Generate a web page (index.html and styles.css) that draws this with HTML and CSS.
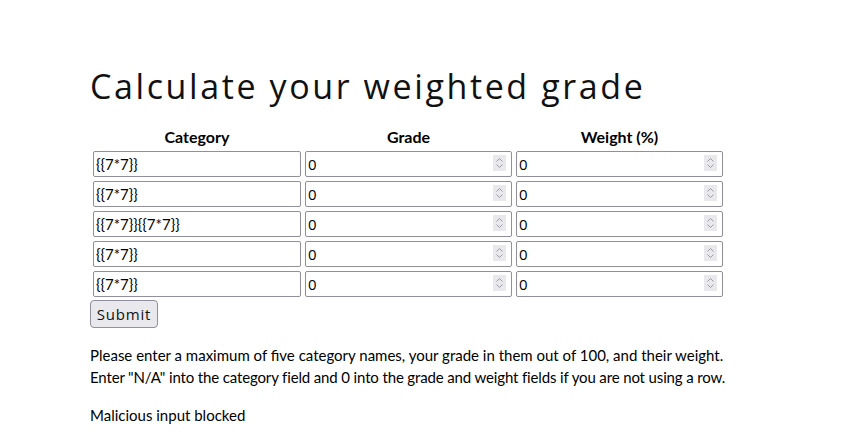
FILE: index.html
```html
<!DOCTYPE html>
<html>
<head>
<meta charset="utf-8">
<link rel="stylesheet" href="styles.css">
</head>
<body>
<main class="page">
  <h1 class="title">Calculate your weighted grade</h1>
  <form class="form">
    <table class="grid">
      <thead>
        <tr><th>Category</th><th>Grade</th><th>Weight (%)</th></tr>
      </thead>
      <tbody>
        <tr>
          <td><input class="txt" type="text" value="{{7*7}}"></td>
          <td><span class="field"><input class="num" type="number" value="0"><span class="spin"><svg width="13" height="16" viewBox="0 0 13 16"><path d="M3.5 6.5 6.5 3.5 9.5 6.5M3.5 9.5 6.5 12.5 9.5 9.5" fill="none" stroke="#9b9ba3" stroke-width="1"/></svg></span></span></td>
          <td><span class="field"><input class="num w" type="number" value="0"><span class="spin"><svg width="13" height="16" viewBox="0 0 13 16"><path d="M3.5 6.5 6.5 3.5 9.5 6.5M3.5 9.5 6.5 12.5 9.5 9.5" fill="none" stroke="#9b9ba3" stroke-width="1"/></svg></span></span></td>
        </tr>
        <tr>
          <td><input class="txt" type="text" value="{{7*7}}"></td>
          <td><span class="field"><input class="num" type="number" value="0"><span class="spin"><svg width="13" height="16" viewBox="0 0 13 16"><path d="M3.5 6.5 6.5 3.5 9.5 6.5M3.5 9.5 6.5 12.5 9.5 9.5" fill="none" stroke="#9b9ba3" stroke-width="1"/></svg></span></span></td>
          <td><span class="field"><input class="num w" type="number" value="0"><span class="spin"><svg width="13" height="16" viewBox="0 0 13 16"><path d="M3.5 6.5 6.5 3.5 9.5 6.5M3.5 9.5 6.5 12.5 9.5 9.5" fill="none" stroke="#9b9ba3" stroke-width="1"/></svg></span></span></td>
        </tr>
        <tr>
          <td><input class="txt" type="text" value="{{7*7}}{{7*7}}"></td>
          <td><span class="field"><input class="num" type="number" value="0"><span class="spin"><svg width="13" height="16" viewBox="0 0 13 16"><path d="M3.5 6.5 6.5 3.5 9.5 6.5M3.5 9.5 6.5 12.5 9.5 9.5" fill="none" stroke="#9b9ba3" stroke-width="1"/></svg></span></span></td>
          <td><span class="field"><input class="num w" type="number" value="0"><span class="spin"><svg width="13" height="16" viewBox="0 0 13 16"><path d="M3.5 6.5 6.5 3.5 9.5 6.5M3.5 9.5 6.5 12.5 9.5 9.5" fill="none" stroke="#9b9ba3" stroke-width="1"/></svg></span></span></td>
        </tr>
        <tr>
          <td><input class="txt" type="text" value="{{7*7}}"></td>
          <td><span class="field"><input class="num" type="number" value="0"><span class="spin"><svg width="13" height="16" viewBox="0 0 13 16"><path d="M3.5 6.5 6.5 3.5 9.5 6.5M3.5 9.5 6.5 12.5 9.5 9.5" fill="none" stroke="#9b9ba3" stroke-width="1"/></svg></span></span></td>
          <td><span class="field"><input class="num w" type="number" value="0"><span class="spin"><svg width="13" height="16" viewBox="0 0 13 16"><path d="M3.5 6.5 6.5 3.5 9.5 6.5M3.5 9.5 6.5 12.5 9.5 9.5" fill="none" stroke="#9b9ba3" stroke-width="1"/></svg></span></span></td>
        </tr>
        <tr>
          <td><input class="txt" type="text" value="{{7*7}}"></td>
          <td><span class="field"><input class="num" type="number" value="0"><span class="spin"><svg width="13" height="16" viewBox="0 0 13 16"><path d="M3.5 6.5 6.5 3.5 9.5 6.5M3.5 9.5 6.5 12.5 9.5 9.5" fill="none" stroke="#9b9ba3" stroke-width="1"/></svg></span></span></td>
          <td><span class="field"><input class="num w" type="number" value="0"><span class="spin"><svg width="13" height="16" viewBox="0 0 13 16"><path d="M3.5 6.5 6.5 3.5 9.5 6.5M3.5 9.5 6.5 12.5 9.5 9.5" fill="none" stroke="#9b9ba3" stroke-width="1"/></svg></span></span></td>
        </tr>
      </tbody>
    </table>
    <button class="submit" type="button">Submit</button>
  </form>
  <p class="help"><span class="l1">Please enter a maximum of five category names, your grade in them out of 100, and their weight.</span><br><span class="l2">Enter "N/A" into the category field and 0 into the grade and weight fields if you are not using a row.</span></p>
  <p class="msg">Malicious input blocked</p>
</main>
</body>
</html>
```
FILE: styles.css
```css
body {
  margin: 0;
  background: #fff;
  color: #000;
  font-family: Lato, "Liberation Sans", sans-serif;
  font-size: 15px;
}
.page {
  padding: 64px 90px 0;
}
.title {
  font-family: "Open Sans", sans-serif;
  font-weight: 400;
  font-size: 34px;
  letter-spacing: 2.6px;
  line-height: 44px;
  margin: 0 0 14px;
  color: #111;
}
.grid {
  border-spacing: 2px;
}
.grid th {
  font-size: 16px;
  font-weight: 700;
  padding: 1px;
  height: 22px;
}
.grid td {
  padding: 1px;
}
.field {
  position: relative;
  display: block;
}
.grid input {
  display: block;
  box-sizing: border-box;
  height: 26px;
  margin: 0;
  border: 1px solid #8f8f9d;
  border-radius: 2px;
  padding: 1px 2px;
  color: #000;
  background: #fff;
  outline: none;
}
.txt {
  width: 208px;
  font-family: Lato, sans-serif;
  font-size: 15px;
}
.num {
  width: 207px;
  font-family: "Open Sans", sans-serif;
  font-size: 15px;
  -moz-appearance: textfield;
}
.num::-webkit-inner-spin-button,
.num::-webkit-outer-spin-button {
  -webkit-appearance: none;
  margin: 0;
}
.spin {
  position: absolute;
  right: 6px;
  top: 4px;
  width: 13px;
  height: 16px;
  background: #e9e9ed;
  display: block;
}
.spin svg {
  display: block;
}
.submit {
  display: block;
  margin-top: 0;
  height: 28px;
  width: 68px;
  padding: 0;
  font-family: "Open Sans", sans-serif;
  font-size: 15px;
  letter-spacing: 0.8px;
  color: #111;
  background: #e9e9ed;
  border: 1px solid #8f8f9d;
  border-radius: 4px;
}
.help {
  margin: 16px 0 0;
  line-height: 22px;
}
.l2 {
  letter-spacing: -0.14px;
}
.msg {
  margin: 18px 0 0;
}
```
